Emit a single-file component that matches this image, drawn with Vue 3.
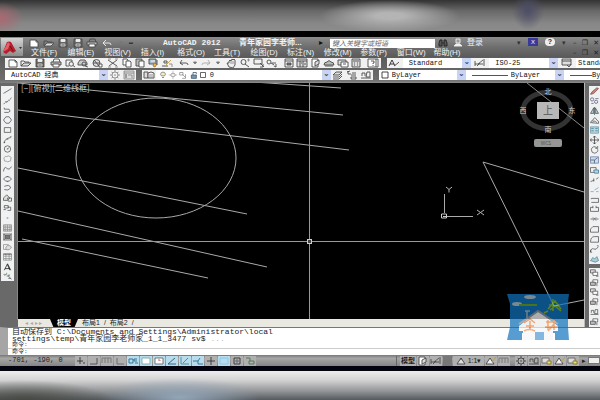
<script setup>
import { h } from 'vue'

// Each glyph is a list of [path, stroke, fill] drawn on a 12 x 10 grid.
const K = '#4a4a4a'
const L = '#8a8a8a'
const glyphs = {
  new: [['M2 2h6l2 2v5h-8z', K, '#fff'], ['M8 2v2h2', K]],
  open: [['M1 8V3h3l1 1h4v1', K], ['M1 8l3-3h7l-3 3z', K, '#ddd']],
  save: [['M2 1h8v8h-8z', K, '#666'], ['M4 1.5h4v2h-4z', '#eee', '#eee'], ['M4 6h4v2h-4z', '#ccc']],
  print: [['M3 4l1-3h5l1 3', K], ['M1 4h10v3h-10z', K, '#bbb'], ['M3 6h6v3h-6z', K, '#fff']],
  preview: [['M2 5V2h6v2M2 5v3h3', K], ['M5 6a2.2 2.2 0 1 0 4.4 0a2.2 2.2 0 1 0-4.4 0M9 7.5l2 1.5', K]],
  publish: [['M1 5l2-3h5l2 3v2h-9z', K, '#ccc'], ['M5 6a2 2 0 1 0 4 0a2 2 0 1 0-4 0M8 8l3 1', K]],
  globe: [['M2 5a3.5 3.5 0 1 0 7 0a3.5 3.5 0 1 0-7 0', K, '#ddd'], ['M3 2l5 6M2 5h7', K], ['M8 6h3v3h-3z', K, '#fff']],
  cut: [['M1 2l9 6M10 2L2 8', K], ['M1 1h3M8 1h3M1 9h3M8 9h3', L]],
  copy: [['M2 1h4l1 1v5h-5z', K, '#fff'], ['M5 3h4l1 1v5h-5z', K, '#fff']],
  paste: [['M2 1h6v7h-6z', K, '#bbb'], ['M5 3h5v6h-5z', K, '#fff']],
  match: [['M1 1h7v5h-7z', K, '#abc'], ['M3 3h4', '#fff'], ['M6 5l3 1-2 3-2-1z', '#a87a20', '#e4b64e'], ['M9 2v5', K]],
  brush: [['M1 8h6M3 3h3v2h-3z', K], ['M5 7l5-5', '#c49a3c'], ['M8 6h3v3', L]],
  undo: [['M4 2L2 5l3 2M2 5h6q2 0 2 2', K]],
  back: [['M5 2L2 5l3 3M2 5h6q2 0 2 2', '#f2f2f2']],
  redo: [['M8 2l2 3-3 2M10 5h-6q-2 0-2 2', '#aaa']],
  tiny: [['M4.5 4h3l-1.5 2z', '#777', '#777']],
  pan: [['M3 9L1 5l2 0V3l1-1 1 1 1-2 1 1 1-1 1 1v5l-2 3z', K, '#eee'], ['M5 3v3M7 3v3', L]],
  zoom: [['M2 4a2.5 2.5 0 1 0 5 0a2.5 2.5 0 1 0-5 0M6 6l4 3', K], ['M8 2h3M9.500 .500v3', L]],
  zoomwin: [['M1 1h8v5h-8z', K], ['M7 5l4 4M10 6v3h-3', K]],
  zoomprev: [['M1 4a2 2 0 1 0 4 0a2 2 0 1 0-4 0M5 5l3 2', K], ['M6 5h4M10 9V6M8 8l2 1', K]],
  panel: [['M2 1h8v8h-8z', K, '#eee'], ['M2 3h8', K], ['M4 5h4v2h-4z', K, '#777']],
  palette: [['M1 1h10v8h-10z', K, '#ddd'], ['M1 3h10M4 3v6M7 3v6M5 5h1M8 6h2', K]],
  sheet: [['M2 1h6v8h-6z', K, '#fff'], ['M5 4l4-2v4l-4 2z', K, '#ddd']],
  cloud: [['M1 7q0-3 3-3q2-3 4 0q3 0 3 3z', K, '#bbb'], ['M2 8h8', K]],
  markup: [['M1 2h8v5h-8z', K, '#ddd'], ['M4 4h7v5h-7z', K, '#fff'], ['M6 6h3', K]],
  calc: [['M2 1h8v8h-8z', K, '#ddd'], ['M3 3h6', K], ['M4 5h1M7 5h1M4 7h1M7 7h1', K]],
  help: [['M1 1h10v8h-10z', K, '#fff'], ['M4 3h3v2h-1v1M6 7v1M9 1v8', K]],
  text: [['M1 8l3-6 3 6M2 6h4', '#222'], ['M6 8l4-3M10 4l1 1', K]],
  dim: [['M1 3v5M10 1v7M1 6h8', K], ['M4 6l5-4', '#555'], ['M3 8l3-3', K]],
  table: [['M1 1h9v6h-9z', K, '#ddd'], ['M1 3h9M6 7l2 2 2-3', K]],
  gear: [['M3 5a3 3 0 1 0 6 0a3 3 0 1 0-6 0M5 5h2', L], ['M6 0v2M6 8v2M1 5h2M9 5h2M2.500 2l1.500 1M9.500 2l-1.500 1M2.500 8l1.500-1M9.500 8l-1.500-1', L]],
  work: [['M1 1h10v8h-10z', L, '#ddd'], ['M1 3h10M5 5h4v3', L], ['M3 4v4', K]],
  layers: [['M1 2h4v6h-4z', K, '#ddd'], ['M5 3l3-1 3 1v5h-6z', K, '#eee'], ['M6 5h4M6 7h4', L]],
  bulb: [['M4 6q-2-2 0-4q2-1 4 0q2 2 0 4z', '#777', '#f2edc0'], ['M5 8h2', K]],
  sun: [['M3 5q3-5 6 0q-3 5-6 0z', '#777', '#eee'], ['M1 5h1M10 5h1M6 0v1M6 9v1', L]],
  freeze: [['M2 2h4v3h-4zM5 4l4 4M9 4v5h-4', L]],
  lock: [['M4 5h6v4h-6z', '#34506a', '#7899b2'], ['M6 5V2h4v2', '#34506a']],
  box: [['M3 2h6v6h-6z', '#333', '#fff']],
  stack: [['M1 5l3-3h6l-3 3z', K, '#ddd'], ['M1 7h6l3-3M1 9h6l3-3', K]],
  prevlayer: [['M1 2l3-1M2 1v3h3', K], ['M6 3h4M5 5h5M5 7h5v2h-5z', K]],
  states: [['M1 8h10M2 6V3h3v3M7 2h3v5h-4z', K]],
  line: [['M1 8L11 2', K]],
  xline: [['M1 9l2-2M5 6l2-1M9 3l2-2', K], ['M3 6h2v1M7 4h2', K]],
  pline: [['M2 2v2h6q3 3-1 4h-5', K]],
  polygon: [['M4 1h4l3 4-3 4h-4l-3-4z', K]],
  rect: [['M2 2h8v6h-8z', K]],
  arc: [['M2 9q0-6 8-7', K], ['M1 8h2M5 4h2M9 1h2', K]],
  circle: [['M2 5a4 4 0 1 0 8 0a4 4 0 1 0-8 0M6 5l2-2M5 5h2', K]],
  rev: [['M2 3q1-2 3-1q2-2 4 0q3 1 1 3q1 3-2 3q-2 1-3 0q-4 0-3-2q-1-1 0-3', L]],
  spline: [['M1 8q1-7 4-4t6-2', K]],
  ellipse: [['M1 5q5-6 10 0q-5 6-10 0z', K], ['M5 2h2M5 8h2', K]],
  earc: [['M2 3q7-3 8 2q-3 4-8 2', K]],
  insert: [['M1 5l4-4 4 4-3 3h-5z', K, '#ddd'], ['M6 5h5v4h-4z', K]],
  block: [['M2 2h5v3h-5zM1 7h3M6 4h4v4h-4', K]],
  point: [['M5 5h2', K]],
  hatch: [['M1 1h10v8h-10z', L, '#ddd'], ['M1 4h10M1 7h10M3 1v8M6 1v8M9 1v8', L]],
  gradient: [['M1 1h10v8h-10z', L, '#bbb'], ['M3 3h6v4h-6z', '#555', '#777'], ['M1 1l2 2M11 1L9 3M1 9l2-2M11 9L9 7', K]],
  region: [['M1 2h6v6h-6z', L], ['M4 5q3-4 7 0q-2 5-7 3z', L, '#ddd']],
  grid: [['M1 1h10v8h-10zM1 4h10M1 7h10M4 1v8M8 1v8', L], ['M1 1.500h10', K]],
  letter: [['M2 9l4-8 4 8M3 7h6', '#111'], ['M6 2l3 7', '#111']],
  add: [['M1 3h4v-2M2 5l2-2', '#6b8460'], ['M5 5h3v-2M7 5l4 4M7 8h3', K]],
  erase: [['M1 9l2-3 6-5 2 1-6 6-3 1z', '#7b453c', '#c98a7a']],
  mcopy: [['M1 3a2 2 0 1 0 4 0a2 2 0 1 0-4 0M6 6a2 2 0 1 0 4 0a2 2 0 1 0-4 0M7 2h4M2 8h3', '#557']],
  mirror: [['M5 1v7h-4zM7 1v7h4z', K, '#bcc'], ['M6 0v10', '#456']],
  offset: [['M1 7q1-3 3-3q2-6 5 0q3 1 2 4z', K], ['M3 7q2-4 6 0', K]],
  array: [['M1 1h10v8h-10z', '#6496a8', '#b7d6de'], ['M2 3h3M7 3h3M2 6h3M7 6h3', '#38708a']],
  move: [['M6 0v10M1 5h10M4 2l2-2 2 2M4 8l2 2 2-2M2 3L1 5l1 2M10 3l1 2-1 2', '#333']],
  rotate: [['M9 2q-5-3-7 2q0 5 4 5q5-1 4-5M7 3h3V0', K]],
  scale: [['M1 1h10v8h-10z', '#67a', '#c9dee8'], ['M1 5h5v4M6 5l4-3', '#456']],
  stretch: [['M1 2h7v6h-7z', K], ['M5 5h6v4h-5z', '#38708a', '#b7d6de']],
  trim: [['M1 7l5-2M8 4l3-2M5 3v4', K]],
  extend: [['M1 7h4M6 5l5-3M8 7h3', '#6aa0b8']],
  breakpt: [['M2 3h9v5h-9M2 3v1', K]],
  breakat: [['M1 3h3M1 3v5h10v-5h-3M4 1v3M8 1v3', K]],
  join: [['M1 5h4M7 5h4M4 3l2 2-2 2M8 3l-2 2 2 2', K]],
  chamfer: [['M1 9V5l3-3h7v7z', K]],
  fillet: [['M1 9q0-7 5-7h5v7z', K]],
  blend: [['M1 9q1-6 4-4t6-3', K], ['M1 6v3h2M9 1h2', K]],
  explode: [['M1 7l3-4 2 2 3-3 2 5-4 2z', '#4b8394', '#a9cbd4']],
  front: [['M1 1h6v4h-6z', K, '#ddd'], ['M4 4h6v4h-6z', K, '#fff'], ['M8 9h3', K]],
  behind: [['M4 1h6v4h-6z', K, '#fff'], ['M1 4h6v4h-6z', K, '#bbb'], ['M9 6v3', K]],
  search: [['M2 8V5l1-3h2v6zM7 8V2h2l1 3v3zM5 5h2', '#222', '#555']],
  user: [['M4 1h4v4h-4z', '#eee', '#999'], ['M2 8h8l-2-2h-4z', '#eee', '#eee']],
  snap: [['M5 1v7M2 5h6M8 7h2', '#333']],
  ortho: [['M9 2v6h-7', K]],
  gridon: [['M1 2h9M1 2v5M4 2v5M7 2v5M10 2v5', '#777']],
  corner: [['M3 2v6h7', '#666']],
  osnap: [['M2 3h4v4h-4zM10 3h-3v2h3M8 7h3', '#29698d']],
  frame: [['M2 2h8v6h-8z', '#7aa', '#fff']],
  pale: [['M2 2h8v6h-8z', '#8fc0dc', '#b4dcf2']],
  frame3: [['M2 2h8v6h-8z', '#666', '#fff'], ['M5 4h2v1', '#c55']],
  track: [['M2 8L9 2M2 8h8', '#255c78']],
  ducs: [['M2 1v7h8M4 7l5-5', '#3b8b9b']],
  dyn: [['M1 5h5v3h5M6 5l2-3', '#247092']],
  lwt: [['M6 1v8M2 5h8', '#333']],
  quick: [['M3 2h6v6h-6z', '#333'], ['M5 4h2v2h-2z', '#666']],
  cycle: [['M2 2h4v3M5 5h5v3h-5z', '#4d7654']],
  scaleA: [['M1 8l4-6 4 6zM5 2v2', '#444', '#ddd']],
  sync: [['M1 8l4-6 4 6z', '#444', '#eee'], ['M7 6l4-5', '#b89a30']],
  tray: [['M1 2h7v5h-7z', '#666', '#ddd'], ['M6 5h4v3h-4z', '#8c7620', '#eadb72']]
}

const Icon = (props) =>
  h('svg', { viewBox: '0 0 12 10', 'aria-hidden': 'true' },
    (glyphs[props.name] || []).map(([d, stroke, fill]) =>
      h('path', { d, stroke, fill: fill || 'none', 'stroke-width': 0.9 })))
Icon.props = ['name']

const menus = ['文件(F)', '编辑(E)', '视图(V)', '插入(I)', '格式(O)', '工具(T)', '绘图(D)', '标注(N)', '修改(M)', '参数(P)', '窗口(W)', '帮助(H)']
const quick = ['new', 'open', 'save', 'save', 'print', 'back', 'tiny']
const standard = [
  { span: 3, items: ['new', 'open', 'save'] },
  { span: 4, items: ['print', 'preview', 'publish', 'globe'] },
  { span: 5, items: ['cut', 'copy', 'paste', 'match', 'brush'] },
  { span: 3.3, items: ['undo', 'tiny', 'redo', 'tiny'] },
  { span: 4, items: ['pan', 'zoom', 'zoomwin', 'zoomprev'] },
  { span: 6, items: ['panel', 'palette', 'sheet', 'cloud', 'markup', 'calc'] },
  { span: 1, items: ['help'] }
]
const draw = ['line', 'xline', 'pline', 'polygon', 'rect', 'arc', 'circle', 'rev', 'spline', 'ellipse', 'earc', 'insert', 'block', 'point', 'hatch', 'gradient', 'region', 'grid', 'letter', 'add']
const modify = ['erase', 'mcopy', 'mirror', 'offset', 'array', 'move', 'rotate', 'scale', 'stretch', 'trim', 'extend', 'breakpt', 'breakat', 'join', 'chamfer', 'fillet', 'blend', 'explode']
const order = ['front', 'behind', 'front', 'behind', 'states', 'behind']
const modes = [
  ['snap'], ['ortho'], ['gridon'], ['corner'], ['osnap', 1], ['frame', 1], ['frame3', 1],
  ['track', 1], ['ducs', 1], ['dyn', 1], ['lwt'], ['pale', 1], ['quick'], ['cycle']
]
const lines = [
  [210, 79, 341, 88], [18, 83, 343, 115], [18, 110, 349, 150], [18, 168, 247, 214],
  [18, 211, 267, 267], [22, 239, 208, 278],
  [483, 162, 584, 192], [483, 162, 554, 306], [554, 306, 584, 300]
]
</script>

<template>
  <div class="screen">
    <div class="haze haze-top"></div>
    <main class="app">
      <header class="title">
        <button class="logo" aria-label="A">
          <svg viewBox="0 0 22 17" aria-hidden="true">
            <path d="M2 13L6 3q2-1 4 0l5 9-3 2-3-2-4 3z" fill="#b51f2c" />
            <path d="M7 3l-5 10 5-3 2-5z" fill="#e3606a" />
            <path d="M9 7l3 5" stroke="#7c0c18" />
            <path d="M18 8h3l-1.500 2z" fill="#333" />
          </svg>
        </button>
        <div class="title-rows">
          <div class="caption">
            <div class="quick">
              <button v-for="(q, i) in quick" :key="i"><Icon :name="q" class="ic" /></button>
              <span class="dots">▪▪</span>
            </div>
            <h1>AutoCAD 2012</h1>
            <span class="doc">青年家园李老师...</span>
            <span class="play">▸</span>
            <input class="search" type="text" aria-label="搜索" placeholder="键入关键字或短语">
            <div class="account">
              <Icon name="search" class="ic" /><Icon name="user" class="ic" /><a href="#">登录</a>
            </div>
            <div class="badges">
              <span>▾</span><button class="exchange">X</button><button class="ask">?</button><span>▾</span>
            </div>
            <div class="win"><button>–</button><button>❐</button><button>✕</button></div>
          </div>
          <div class="caption">
            <nav class="menus"><a v-for="m in menus" :key="m" href="#">{{ m }}</a></nav>
            <div class="win"><button>–</button><button>❐</button><button>✕</button></div>
          </div>
        </div>
      </header>

      <section class="bars">
        <div class="bar-row first">
          <div class="bar groups">
            <div v-for="(g, i) in standard" :key="i" class="group" :style="{ flexGrow: g.span }">
              <button v-for="(n, j) in g.items" :key="j" :class="{ narrow: n === 'tiny' }"><Icon :name="n" class="ic" /></button>
            </div>
          </div>
          <div class="bar styles">
            <Icon name="text" class="ic" />
            <label class="pick"><select aria-label="文字样式"><option>Standard</option></select></label>
            <Icon name="dim" class="ic" />
            <label class="pick"><select aria-label="标注样式"><option>ISO-25</option></select></label>
            <Icon name="table" class="ic" />
            <label class="pick cut"><select aria-label="表格样式"><option>Standard</option></select></label>
          </div>
        </div>
        <div class="bar-row second">
          <div class="bar">
            <label class="pick space"><select aria-label="工作空间"><option>AutoCAD 经典</option></select></label>
            <button><Icon name="gear" class="ic" /></button><button><Icon name="work" class="ic" /></button>
          </div>
          <div class="bar">
            <button><Icon name="layers" class="ic" /></button>
            <span class="flags"><Icon v-for="f in ['bulb', 'sun', 'freeze', 'lock', 'box']" :key="f" :name="f" class="ic" /></span>
            <label class="pick"><select aria-label="图层"><option>0</option></select></label>
            <button><Icon name="stack" class="ic" /></button><button><Icon name="prevlayer" class="ic" /></button><button><Icon name="states" class="ic" /></button>
          </div>
          <div class="bar props">
            <Icon name="box" class="ic" />
            <label class="pick color"><select aria-label="颜色"><option>ByLayer</option></select></label>
            <span class="rule"></span>
            <label class="pick type"><select aria-label="线型"><option>ByLayer</option></select></label>
            <span class="rule short"></span>
            <label class="pick cut"><select aria-label="线宽"><option>ByLayer</option></select></label>
          </div>
        </div>
      </section>

      <section class="work">
        <aside class="side left">
          <div class="tools draw"><button v-for="n in draw" :key="n"><Icon :name="n" class="ic" /></button></div>
        </aside>
        <div class="center">
          <div class="view">
            <svg class="model" viewBox="18 83 566 236" preserveAspectRatio="none">
              <g stroke="#a9a9a9" fill="none">
                <line v-for="(l, i) in lines" :key="i" :x1="l[0]" :y1="l[1]" :x2="l[2]" :y2="l[3]" />
                <ellipse cx="156" cy="158" rx="80" ry="60" />
              </g>
              <path d="M309.500 83V319M18 241.500H584" stroke="#999" />
              <rect x="307.500" y="239.500" width="4" height="4" fill="#444" stroke="#ccc" />
              <path d="M444.500 213V194M447 216.500H473" stroke="#aaa" />
              <path d="M441.500 214h5v4h-5zM443 216.500h3" stroke="#ccc" fill="none" />
              <path d="M446 187l3 2.500 3-2.500M449 189.500v3M477 210l7 5M484 210l-7 5" stroke="#b5b5b5" fill="none" />
              <ellipse cx="547" cy="110.500" rx="24" ry="18" fill="none" stroke="#333" stroke-width="5" />
              <path d="M527 83L584 128" stroke="#8a8a8a" />
              <rect x="537" y="102" width="22" height="17" fill="#b7b7b7" />
              <g class="compass">
                <text x="548" y="94">北</text><text x="548" y="132">南</text>
                <text x="523" y="113">西</text><text x="572" y="113">东</text>
                <text class="up" x="548" y="114">上</text>
              </g>
              <rect x="534" y="139" width="28" height="8" rx="2" fill="#969696" />
              <text class="wcs" x="546" y="145">WCS</text>
              <text class="tag" x="21" y="91">[−][俯视][二维线框]</text>
            </svg>
          </div>
          <nav class="tabs">
            <span class="steps">◂ ◂ ▸ ▸</span>
            <a class="tab on" href="#">模型</a><a class="tab" href="#">布局1</a><i>/</i><a class="tab" href="#">布局2</a><i>/</i>
          </nav>
        </div>
        <aside class="side right">
          <div class="tools modify"><button v-for="n in modify" :key="n"><Icon :name="n" class="ic" /></button></div>
          <div class="tools order"><button v-for="(n, i) in order" :key="i"><Icon :name="n" class="ic" /></button></div>
        </aside>
      </section>

      <section class="command">
        <div class="log">
          <p>自动保存到 C:\Documents and Settings\Administrator\local</p>
          <p>settings\temp\青年家园李老师家_1_1_3477 sv$ <span>...</span></p>
          <p class="cmd">命令:</p>
        </div>
        <label class="prompt cmd">命令:<input type="text" aria-label="命令"></label>
      </section>

      <svg class="mark" viewBox="0 0 62 47" aria-hidden="true">
        <g opacity=".7">
          <path d="M0 0h62l-1 8v25l1 13H48V39h-12v7H28V39H15v7H0l3-13V10z" fill="#1274bf" />
          <path d="M12 32L31 17l20 15v5h-5v9H37v-7h-9v7H16v-9h-4z" fill="#f5f6f7" />
          <path d="M12 30L31 17l20 13" stroke="#8796a4" stroke-width="2" fill="none" />
          <path d="M28 38h9v8h-9z" fill="#4f98d3" />
          <path d="M18 17h5M20 17v8" stroke="#9bb6cb" stroke-width="1.500" />
          <ellipse cx="23" cy="3" rx="6" ry="2" fill="#abc3d1" />
          <ellipse cx="10" cy="10" rx="5" ry="2" fill="#abc3d1" />
          <path d="M12 11h18" stroke="#64a629" stroke-width="2" />
          <path d="M37 19l4-2M41 15l7-8 6 8M46 5v12M42 11l10 1M43 16l5-4 6 5" stroke="#83bb2d" stroke-width="1.500" fill="none" />
          <path d="M17 29l6-4 5 4M19 32h8M23 27v9M17 37q5-3 11 0M39 28h10M41 26v10M47 26v10M38 33h13M41 37l7-8" stroke="#f0894b" stroke-width="1.500" fill="none" />
        </g>
      </svg>

      <footer class="status">
        <output>-701, -190, 0</output>
        <div class="modes">
          <button v-for="([n, on], i) in modes" :key="i" :class="{ on }"><Icon :name="n" class="ic" /></button>
        </div>
        <div class="right-status">
          <button class="word">模型</button>
          <button><Icon name="sheet" class="ic" /></button><button><Icon name="dim" class="ic" /></button><button class="dark" aria-label="栅格"></button>
          <button class="ratio"><Icon name="scaleA" class="ic" />1:1▾</button>
          <button><Icon name="sync" class="ic" /></button><button><Icon name="gridon" class="ic" /></button>
          <span class="gap"></span>
          <button><Icon name="gear" class="ic deep" /></button><button><Icon name="states" class="ic" /></button><button><Icon name="tray" class="ic" /></button><button><Icon name="sync" class="ic" /></button><button><Icon name="tray" class="ic" /></button>
          <span class="arrow">▸</span><span class="blank"></span>
        </div>
      </footer>
    </main>
    <div class="haze haze-bottom"></div>
  </div>
</template>

<style>
body { background: #000; }
</style>

<style scoped>
* { box-sizing: border-box; }
.screen {
  display: flex;
  flex-direction: column;
  min-height: 100vh;
  overflow: hidden;
  background: #000;
  font: 8px/10px "Liberation Sans", "Noto Sans CJK SC", sans-serif;
  color: #222;
}
button { display: flex; align-items: center; justify-content: center; padding: 0; border: 0; background: none; font: inherit; color: inherit; }
a { color: inherit; text-decoration: none; }
.ic { display: block; flex: none; width: 12px; height: 10px; }
.haze { height: 31px; flex: none; }
.haze-top {
  background:
    radial-gradient(ellipse 24px 16px at 0 18px, #ab6872 0%, transparent 100%),
    radial-gradient(ellipse 70px 16px at 65% 16px, #b4b4b4 20%, transparent 100%),
    radial-gradient(ellipse 16px 20px at 88% 10px, #4c4c66 0%, transparent 100%),
    linear-gradient(#333, #686868 35%, #878787 75%, #8c8c8c);
}
.haze-bottom {
  background:
    radial-gradient(ellipse 90px 22px at 4% 100%, #454740 0%, transparent 100%),
    radial-gradient(ellipse 80px 20px at 30% 85%, #92a5b8 0%, transparent 100%),
    linear-gradient(#ededed, #d2d2d3 30%, #929496 65%, #454c52);
}
.app { position: relative; display: flex; flex: 1; flex-direction: column; min-height: 0; margin: 6px 0 0; border-bottom: 5px solid #02030f; background: #666; }

.title { display: flex; gap: 4px; height: 20px; padding: 0 1px; background: linear-gradient(#8c8c8c, #6e6e6e 50%, #5a5a5a); color: #f2f2f2; }
.logo { flex: none; width: 22px; height: 18px; margin-top: 1px; background: linear-gradient(#d5d5d5, #8c8c8c); }
.logo svg { width: 22px; height: 17px; }
.title-rows { display: flex; flex: 1; flex-direction: column; min-width: 0; padding-top: 1px; }
.caption { display: flex; align-items: center; height: 10px; }
.caption h1 { flex: none; width: 76px; margin: 0; font: bold 8px/10px "Liberation Mono", monospace; white-space: nowrap; }
.quick { display: flex; flex: none; align-items: center; width: 136px; padding-right: 30px; }
.quick button { flex: 1; }
.dots { font-size: 6px; color: #222; }
.doc { flex: none; width: 80px; font-weight: bold; white-space: nowrap; }
.play { width: 11px; color: #111; }
.search { flex: 1 1 104px; min-width: 0; height: 9px; padding: 0 2px; border: 0; background: #fff; font: italic 7px/9px "Liberation Sans", "Noto Sans CJK SC", sans-serif; }
.search::placeholder { color: #666; opacity: 1; }
.account { display: flex; flex: none; gap: 3px; width: 82px; padding-left: 2px; }
.badges { display: flex; flex: none; gap: 7px; width: 56px; font-size: 7px; color: #333; }
.exchange { width: 10px; height: 8px; background: #39399a; color: #fff; font-size: 6px; }
.ask { width: 10px; height: 8px; border-radius: 5px; background: #eee; color: #223; font-weight: bold; }
.win { display: flex; flex: none; width: 26px; justify-content: space-between; font: 7px/10px "DejaVu Sans", sans-serif; color: #222; }
.menus { display: grid; flex: 1; grid-template-columns: repeat(12, 1fr); padding: 0 103px 0 4px; white-space: nowrap; }

.bars { display: flex; flex-direction: column; gap: 2px; padding: 1px 0 3px 5px; background: linear-gradient(#5c5c5c, #6c6c6c 85%, #808080); }
.bar-row { display: grid; gap: 6px; height: 10px; }
.first { grid-template-columns: 375fr 213fr; }
.second { grid-template-columns: 130fr 230fr 220fr; }
.bar { display: flex; align-items: center; min-width: 0; height: 10px; overflow: hidden; background: #f1f1f2; }
.bar > button { flex: none; width: 14px; }
.groups { gap: 3px; padding: 0 1px; }
.group { display: flex; flex: 1 1 0; min-width: 0; }
.group button { flex: 1 1 0; min-width: 0; }
.group .narrow { flex-grow: .65; }
.pick { position: relative; display: block; flex: 1; min-width: 0; height: 10px; background: #fff; }
.pick::after { content: "⌄"; position: absolute; top: 0; right: 0; width: 9px; height: 10px; background: #c9d3f4; color: #345; font: bold 8px/7px "DejaVu Sans", sans-serif; text-align: center; pointer-events: none; }
.pick select { display: block; width: 100%; height: 10px; padding: 0 6px; border: 0; appearance: none; background: none; color: #111; font: 7px/10px "Liberation Mono", "Noto Sans CJK SC", monospace; }
.space { flex: none; width: 103px; }
.flags { display: flex; flex: none; padding-left: 2px; background: #fff; }
.flags .ic { width: 10px; }
.flags + .pick select { padding: 0 2px; }
.styles { gap: 3px; padding-left: 1px; }
.cut { flex: none; width: 24px; overflow: hidden; }
.cut::after { display: none; }
.cut select { width: 50px; padding: 0 2px; }
.props { background: #fff; }
.props .cut { width: 8px; }
.props .cut select { padding: 0; }
.color { flex: none; width: 75px; }
.color select { padding: 0 1px; }
.rule { flex: none; width: 36px; height: 1px; margin-left: 6px; background: #555; }
.rule.short { width: 22px; }
.type select { padding: 0 3px; }

.work { display: flex; flex: 1; min-height: 0; }
.side { display: flex; flex: none; flex-direction: column; background: #696969; }
.left { width: 18px; padding: 3px 4px 0 1px; }
.right { width: 16px; padding: 3px 0 0 4px; gap: 4px; border-left: 1px solid #bbb; }
.tools { display: grid; grid-auto-rows: 1fr; background: #f0f1f2; overflow: hidden; }
.tools button { min-height: 0; }
.tools .ic { width: 11px; height: 8px; }
.draw { height: 81%; }
.modify { flex: 18 1 0; }
.order { flex: 6 1 0; }
.center { display: flex; flex: 1; flex-direction: column; min-width: 0; }
.view { flex: 1; min-height: 0; background: #000; box-shadow: 0 0 0 1px #888; }
.model { display: block; width: 100%; height: 100%; }
.model text { font: 8px "Noto Sans CJK SC", sans-serif; fill: #ccc; }
.model .compass text { text-anchor: middle; font-size: 7px; }
.model .compass .up { font-size: 10px; fill: #555; }
.model .wcs { font-size: 5px; text-anchor: middle; fill: #555; }
.tabs { position: relative; display: flex; align-items: center; height: 8px; overflow: hidden; background: #e9e9e2; font-size: 7px; line-height: 8px; white-space: nowrap; }
.steps { width: 32px; color: #aaa; font-size: 6px; text-align: center; }
.tab { padding: 0 4px; }
.tab.on { padding: 0 7px; background: #000; color: #fff; font-weight: bold; clip-path: polygon(0 0, 100% 0, 88% 100%, 12% 100%); }
.tabs i { font-style: normal; }

.command { border-top: 1px solid #777; border-left: 8px solid #a5a5a5; background: #fff; font: 8px/7px "Liberation Mono", "Noto Sans CJK SC", monospace; color: #222; overflow: hidden; }
.log { padding: 0 4px; border-bottom: 1px solid #ccc; white-space: nowrap; }
.log p { margin: 0; height: 7px; }
.log span { color: #bbb; }
.log .cmd, .prompt { height: 6px; }
.cmd { font-size: 6px; line-height: 6px; }
.prompt { display: flex; padding: 0 4px; }
.prompt input { flex: 1; height: 5px; padding: 0; border: 0; outline: 0; font: inherit; }
.mark { position: absolute; right: 31px; bottom: 25px; width: 62px; height: 47px; }

.status { display: flex; align-items: center; height: 11px; background: linear-gradient(#777, #a6a6a6 30%, #858585); overflow: hidden; }
.status output { flex: none; width: 75px; padding-left: 8px; font: 7px/11px "Liberation Mono", monospace; }
.modes { display: flex; gap: 1px; }
.modes button, .right-status button { width: 12px; height: 10px; background: #b0b0b0; }
.modes button.on { background: #b9dced; }
.right-status { display: flex; flex: none; gap: 1px; width: 204px; height: 10px; margin-left: auto; border-left: 1px solid #666; padding-left: 3px; font-size: 7px; align-items: center; }
.right-status button.word { width: 16px; font-weight: bold; }
.right-status button.dark { width: 9px; background: #777; }
.right-status button.ratio { width: 31px; }
.gap { width: 3px; }
.deep { filter: brightness(.5); }
.arrow { width: 7px; text-align: center; }
.blank { flex: 1; height: 7px; border: 1px solid #777; background: #eee; }
</style>
